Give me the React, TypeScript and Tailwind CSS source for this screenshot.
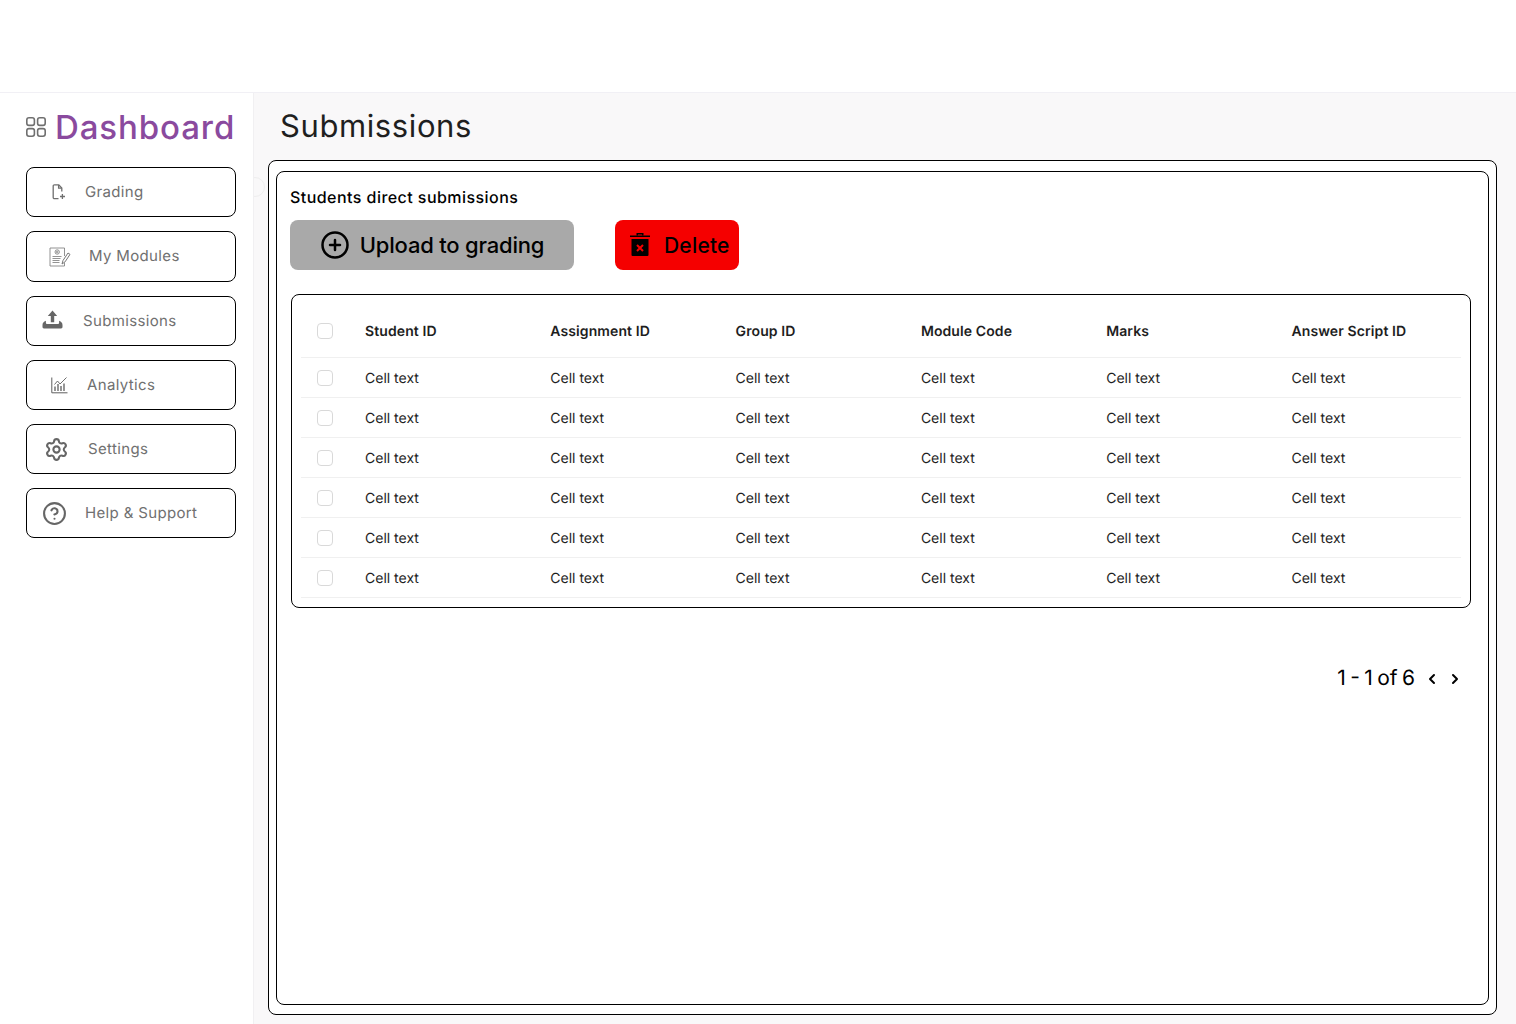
import { ChevronLeft, ChevronRight, CircleHelp, CirclePlus, Settings } from "lucide-react";
import type { ReactNode } from "react";

function GridIcon() {
  return (
    <svg width="22" height="22" viewBox="0 0 22 22" fill="none" stroke="#6f6f6f" strokeWidth="1.6">
      <rect x="1.8" y="1.8" width="7.6" height="7.6" rx="2.2" />
      <rect x="12.6" y="1.8" width="7.6" height="7.6" rx="2.2" />
      <rect x="1.8" y="12.6" width="7.6" height="7.6" rx="2.2" />
      <rect x="12.6" y="12.6" width="7.6" height="7.6" rx="2.2" />
    </svg>
  );
}

function FileAddIcon() {
  return (
    <svg width="14" height="16" viewBox="0 0 14 16" fill="none" stroke="#6f6f6f" strokeWidth="1.3">
      <path d="M6.500 14.600H2.400a1.200 1.200 0 0 1-1.200-1.200V2a1.200 1.200 0 0 1 1.200-1.200h4.400l3 3.200v3.600" />
      <path d="M6.600 1v3.200h3.100" />
      <path d="M10.400 10v5M8 12.500h5" />
    </svg>
  );
}

function ModulesIcon() {
  return (
    <svg width="22" height="20" viewBox="0 0 22 20" fill="none" stroke="#777777" strokeWidth="0.8">
      <path d="M15.500 9V1H1v18h14.500v-3" />
      <circle cx="8.200" cy="5" r="2.200" />
      <circle cx="8.200" cy="5" r="0.800" />
      <path d="M3.500 9.500h9M3.500 11.500h8M3.500 13.500h7M3.500 15.500h7" />
      <path d="M13 17l1-3.500 5-7.500 2 1.400-5 7.500z" strokeWidth="1" />
    </svg>
  );
}

function UploadTrayIcon() {
  return (
    <svg className="mb-1" width="21" height="19" viewBox="0 0 21 19" fill="#666666">
      <path d="M10.500 0.500 15.200 6h-3v6.200H8.800V6h-3z" />
      <path d="M0.500 15c0-1.800 1.200-3.600 3.400-4.200v1.900c0 .8.600 1.400 1.400 1.400h10.400c.8 0 1.400-.6 1.400-1.400v-1.900c2.200.6 3.400 2.400 3.400 4.200v2c0 .8-.6 1.400-1.400 1.400H1.900c-.8 0-1.400-.6-1.400-1.400z" />
    </svg>
  );
}

function AnalyticsIcon() {
  return (
    <svg width="17" height="17" viewBox="0 0 17 17" fill="none" stroke="#5f5f5f" strokeWidth="1">
      <path d="M.8.500v15.300H16.500" />
      <path d="M3.500 7.500 6.500 4l2.500 3 6.500-6.500" strokeWidth="0.9" />
      <path d="M4 9.500v4.500M7 7v7M10 9v5M13 6.500v7.500" strokeWidth="1.300" />
    </svg>
  );
}

function TrashIcon() {
  return (
    <svg width="20" height="24" viewBox="0 0 20 24">
      <path d="M0 2.500h20v1.500H0z" />
      <path d="M6.500 0h7v2.500h-1.500V1.500H8v1H6.500z" />
      <path d="M1.500 6h17v16a1 1 0 0 1-1 1h-15a1 1 0 0 1-1-1z" />
      <path d="M7 12l6 6M13 12l-6 6" stroke="#f50000" strokeWidth="2" />
    </svg>
  );
}

type NavItem = { label: string; icon: ReactNode; slot: string; gap: string; height: string };

const navItems: NavItem[] = [
  { label: "Grading", icon: <FileAddIcon />, slot: "pl-[25px]", gap: "gap-[19px]", height: "h-[50px]" },
  { label: "My Modules", icon: <ModulesIcon />, slot: "pl-[22px]", gap: "gap-[18px]", height: "h-[51px]" },
  { label: "Submissions", icon: <UploadTrayIcon />, slot: "pl-[15px]", gap: "gap-[20px]", height: "h-[50px]" },
  { label: "Analytics", icon: <AnalyticsIcon />, slot: "pl-[24px]", gap: "gap-[19px]", height: "h-[50px]" },
  { label: "Settings", icon: <Settings size={25} strokeWidth={2} color="#666666" />, slot: "pl-[17px]", gap: "gap-[19px]", height: "h-[50px]" },
  { label: "Help & Support", icon: <CircleHelp size={25} strokeWidth={2} color="#666666" />, slot: "pl-[15px]", gap: "gap-[18px]", height: "h-[50px]" },
];

const columns = ["Student ID", "Assignment ID", "Group ID", "Module Code", "Marks", "Answer Script ID"];
const rows = [0, 1, 2, 3, 4, 5];
const gridCols = "grid grid-cols-[64px_repeat(5,185.3px)_1fr] items-center";

function Checkbox() {
  return <span className="block ml-4 w-4 h-4 rounded-[4px] border border-[#d9d9d9] bg-white" />;
}

export default function App() {
  return (
    <div className="min-h-[1024px] bg-white font-['Inter',sans-serif] [text-rendering:geometricPrecision] antialiased">
      <div className="h-[92px] bg-white" />
      <div className="flex h-[932px] border-t border-[#f1f0f5]">
        <aside className="relative z-10 w-[254px] shrink-0 bg-white border-r border-[#f1f0f2]">
          <div className="flex items-center gap-2 pl-[25px] pb-[6px] h-[74px]">
            <GridIcon />
            <span className="text-[33px] leading-none font-medium text-[#8a4a9e] tracking-[0.9px]">Dashboard</span>
          </div>
          <nav className="flex flex-col gap-[14px] ml-[26px] w-[210px]">
            {navItems.map((item) => (
              <a key={item.label} className={`flex items-center ${item.height} ${item.slot} ${item.gap} rounded-lg border border-black text-[15px] text-[#707070] tracking-[0.35px]`}>
                {item.icon}
                <span>{item.label}</span>
              </a>
            ))}
          </nav>
        </aside>

        <main className="relative flex-1 flex flex-col bg-[#f9f8f9] pl-[14px] pr-[19px] pb-[9px]">
          <span className="absolute -left-[9px] top-[84px] w-5 h-5 rounded-full border border-[#eeeeee] bg-[#f9f8f9]" />
          <h1 className="h-[67px] pl-3 pt-[14px] text-[31px] leading-10 font-normal text-[#1f1f1f] tracking-[0.6px]">Submissions</h1>
          <div className="relative flex-1 flex flex-col rounded-lg border border-black bg-white px-[7px] pt-[10px] pb-[9px]">
            <section className="flex-1 rounded-lg border border-black px-[13px]">
              <h2 className="pt-[15px] h-[48px] text-[16px] leading-5 font-medium text-black tracking-[0.45px]">Students direct submissions</h2>
              <div className="flex gap-[41px]">
                <button className="flex items-center justify-center gap-[10px] w-[284px] h-[50px] rounded-lg bg-[#a9a9a9] text-[22px] font-medium text-black tracking-[-0.2px]">
                  <CirclePlus size={30} strokeWidth={2} />
                  Upload to grading
                </button>
                <button className="flex items-center gap-[14px] pl-[15px] w-[124px] h-[50px] rounded-lg bg-[#f50000] text-[21px] font-medium text-black tracking-[0.2px]">
                  <TrashIcon />
                  <span className="pt-[2px]">Delete</span>
                </button>
              </div>

              <div className="mt-6 ml-px w-[1180px] h-[314px] rounded-lg border border-black px-[9px] pt-[9px] text-sm text-[#1e1e1e]">
                <div className={`${gridCols} h-[54px] border-b border-[#f0f0f0] font-semibold`}>
                  <Checkbox />
                  {columns.map((col) => (
                    <span key={col} className="pt-[3px] tracking-[0.1px]">{col}</span>
                  ))}
                </div>
                {rows.map((row) => (
                  <div key={row} className={`${gridCols} h-10 border-b border-[#f0f0f0]`}>
                    <Checkbox />
                    {columns.map((col) => (
                      <span key={col} className="pt-[3px]">Cell text</span>
                    ))}
                  </div>
                ))}
              </div>

              <div className="flex items-center justify-end gap-[7px] mt-[57px] pr-3 text-[21px] leading-7 text-black">
                <span className="mr-[2px] [word-spacing:-1.500px]">1 - 1 of 6</span>
                <ChevronLeft size={16} strokeWidth={3} />
                <ChevronRight size={16} strokeWidth={3} />
              </div>
            </section>
          </div>
        </main>
      </div>
    </div>
  );
}
